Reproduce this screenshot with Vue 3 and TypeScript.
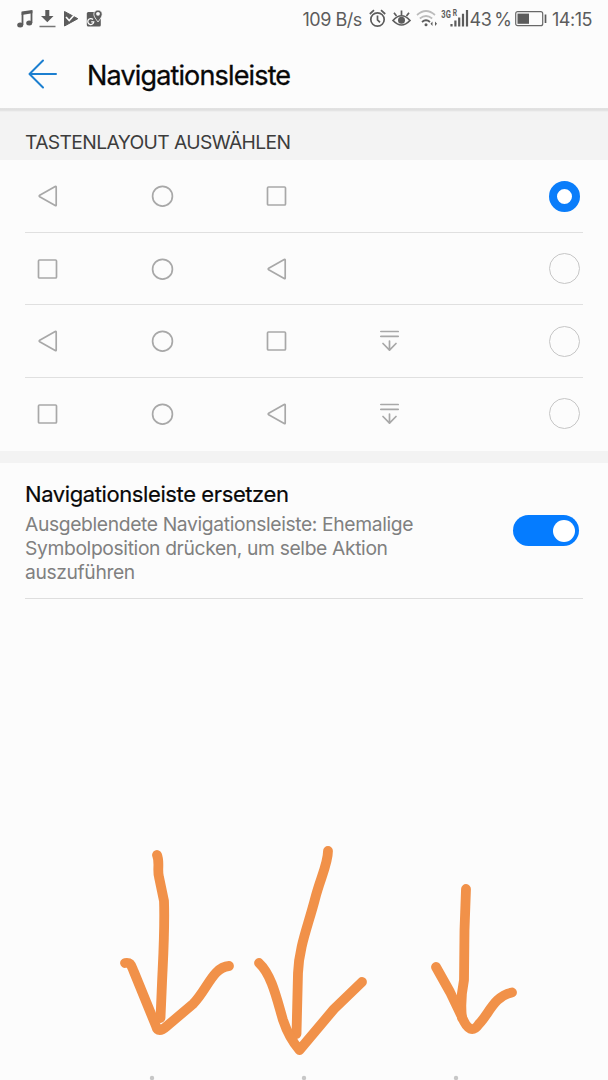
<script setup lang="ts">
import { ref } from 'vue'

type Key = 'back' | 'home' | 'recent' | 'hide' | 'none'

const layouts: Key[][] = [
  ['back', 'home', 'recent', 'none'],
  ['recent', 'home', 'back', 'none'],
  ['back', 'home', 'recent', 'hide'],
  ['recent', 'home', 'back', 'hide'],
]
const selected = ref(0)
const replaceBar = ref(true)
const description = [
  'Ausgeblendete Navigationsleiste: Ehemalige',
  'Symbolposition drücken, um selbe Aktion',
  'auszuführen',
]
</script>

<template>
  <div class="screen">
    <header class="status">
      <svg class="notes" width="90" height="22" viewBox="0 0 90 22">
        <path d="M6.500 17V5L15.500 3.500V15" fill="none" stroke="#5c5c5c" stroke-width="1.800" />
        <path d="M5.600 3.600 16.400 2v3.300L5.600 7Z" fill="#5c5c5c" />
        <ellipse cx="4.200" cy="17" rx="3" ry="2.500" fill="#5c5c5c" />
        <ellipse cx="13.200" cy="15" rx="3" ry="2.500" fill="#5c5c5c" />
        <path d="M29.300 2h4v6h4.200l-6.200 6.300L25 8h4.300Z" fill="#5c5c5c" />
        <path d="M23.500 18.500h16" stroke="#777" stroke-width="1.500" />
        <path d="M48.500 3.500 61.800 10.700 48.500 18Z" fill="#5c5c5c" stroke="#5c5c5c" stroke-linejoin="round" />
        <path d="m50 9 3.200 3.500L60 5" fill="none" stroke="#fcfcfc" stroke-width="1.600" />
        <rect x="70.800" y="4" width="14" height="14.500" rx="1.500" fill="#5c5c5c" />
        <path d="M77 11.500a3 3 0 1 0 .8 2.300h-2.600" fill="none" stroke="#fcfcfc" stroke-width="1.300" />
        <path d="M82 14c-2-3-4.200-5.200-4.200-7.800a4.200 4.200 0 0 1 8.400 0c0 2.600-2.200 4.800-4.200 7.800Z" fill="#5c5c5c" stroke="#fcfcfc" stroke-width=".8" />
        <circle cx="82" cy="5.800" r="1.900" fill="#fcfcfc" />
      </svg>
      <span class="speed">109 B/s</span>
      <svg class="indicators" width="104" height="24" viewBox="0 0 104 24" fill="none" stroke="#5c5c5c">
        <circle cx="9.500" cy="12.500" r="6.700" stroke-width="1.700" />
        <path d="M9.500 8.500v4.300l2.500 2.500M1.800 7 6 3.200M13 3.200 17.200 7" stroke-width="1.700" />
        <path d="M25 13.500Q33.500 4 42 13.500 33.500 22.500 25 13.500Z" stroke-width="1.700" />
        <circle cx="33.500" cy="13.300" r="3.500" fill="#5c5c5c" stroke="none" />
        <path d="M33.500 8V3.500M28.500 9 26 5.800M38.500 9 41 5.800" stroke-width="1.700" />
        <g stroke="#bcbcbc" stroke-width="1.700">
          <path d="M49 8q9-8 18 0M51.800 11.500q6.200-5 12.400 0" />
        </g>
        <path d="M54 15q4-3.500 8 0" stroke-width="1.800" />
        <circle cx="58" cy="17.800" r="1.500" fill="#5c5c5c" stroke="none" />
        <path d="m62.500 16.800 2-2.300v4.600ZM69 16.800l-2-2.300v4.600Z" fill="#5c5c5c" stroke="none" />
        <path d="M83.500 19.500v-2.500M87.400 19.500v-6M91.200 19.500v-9M95 19.500V6.800M99 19.500V3" stroke-width="2.200" />
        <text x="73.300" y="10.500" class="network" textLength="9.500" lengthAdjust="spacingAndGlyphs">3G</text>
        <text x="84.800" y="9" class="roaming" textLength="4.300" lengthAdjust="spacingAndGlyphs">R</text>
      </svg>
      <span class="percent">43 %</span>
      <svg class="battery" width="32" height="18" viewBox="0 0 32 18">
        <rect x=".7" y="1.700" width="27" height="14" rx="2" fill="none" stroke="#686868" stroke-width="1.200" />
        <rect x="2.500" y="3.600" width="11.500" height="10.200" fill="#5c5c5c" />
        <path d="M30.500 4.500v8.500" stroke="#5c5c5c" stroke-width="1.700" />
      </svg>
      <span class="clock">14:15</span>
    </header>

    <div class="titlebar">
      <svg width="30" height="30" viewBox="0 0 30 30" fill="none" stroke="#1c7fd0" stroke-width="2" stroke-linecap="round" stroke-linejoin="round">
        <path d="M28 15H2M15 1.500 1.500 15 15 28.500" />
      </svg>
      <h1>Navigationsleiste</h1>
    </div>

    <h2 class="section"><span>TASTENLAYOUT AUSWÄHLEN</span></h2>

    <div class="options">
      <div v-for="(keys, row) in layouts" :key="row" class="option" @click="selected = row">
        <div v-for="(key, i) in keys" :key="i" class="key">
          <svg width="24" height="24" viewBox="0 0 24 24" fill="none" stroke="#a8a8a8" stroke-width="1.700" stroke-linejoin="round" stroke-linecap="round">
            <path v-if="key === 'back'" d="M20.200 3.200V21Q20.200 22 19.200 21.400L3.700 12.700Q2.700 12 3.700 11.300L19.200 2.500Q20.200 2 20.200 3.200Z" />
            <circle v-else-if="key === 'home'" cx="11.500" cy="12.200" r="9.900" />
            <rect v-else-if="key === 'recent'" x="2.500" y="3" width="18" height="18" rx="1" />
            <path v-else-if="key === 'hide'" d="M.8 2.500h17.400M.8 7.300h17.400M9.500 12v9.200M3 14.500l6.500 6.700 6.500-6.700" />
          </svg>
        </div>
        <span class="radio" :class="{ checked: selected === row }"></span>
      </div>
    </div>

    <section class="replace">
      <div class="copy">
        <h3>Navigationsleiste ersetzen</h3>
        <p><span v-for="line in description" :key="line">{{ line }}</span></p>
      </div>
      <button class="switch" :class="{ on: replaceBar }" @click="replaceBar = !replaceBar"><i></i></button>
    </section>

    <svg class="drawing" width="608" height="240" viewBox="0 840 608 240" fill="none" stroke="#f19149" stroke-width="9.800" stroke-linecap="round" stroke-linejoin="round">
      <path d="M157 855C160 862 157 870 159 877L164 901C165 930 163 960 162 983L160.500 1018" />
      <path d="M125 963C131 962 131 965 134 972L156 1026Q158 1034 167 1026L193 1004C207 990 213 967 229 966" />
      <path d="M328 851C328 864 320 879 315 899C308 926 299 947 298 973L296.500 1034" />
      <path d="M259 963C272 975 277 1000 283 1020Q289 1038 299.500 1050L334 1009 362 982" />
      <path d="M466 889 464.500 930 464 980Q460 1000 462 1018" />
      <path d="M436 967 450 992 462 1017Q470 1037 479 1024C489 1014 494 996 512 992.500" />
      <g fill="#c7c7c7" stroke="none">
        <circle cx="152" cy="1078" r="2.200" />
        <circle cx="304" cy="1078" r="2.200" />
        <circle cx="456" cy="1078" r="2.200" />
      </g>
    </svg>
  </div>
</template>

<style>
body { margin: 0; background: #fcfcfc; }
</style>

<style scoped>
.screen {
  width: 608px;
  height: 1080px;
  overflow: hidden;
  display: flex;
  flex-direction: column;
  background: #fcfcfc;
  font-family: Inter, Roboto, sans-serif;
}
h1, h2, h3, p { margin: 0; font-weight: 400; white-space: nowrap; }
.status {
  height: 40px;
  box-sizing: border-box;
  padding: 0 0 0 15.500px;
  display: flex;
  align-items: center;
  color: #5c5c5c;
  font-size: 18px;
  white-space: nowrap;
}
.status svg { flex: none; }
.status span { flex: none; box-sizing: border-box; margin-top: -1px; }
.notes { margin: -3px 0 0; }
.status .speed { width: 61px; margin-left: 197px; letter-spacing: -.500px; }
.indicators { margin: -3px 0 0 4px; }
.network, .roaming { font-family: Roboto, sans-serif; font-weight: 700; fill: #5c5c5c; stroke: none; }
.network { font-size: 11px; }
.roaming { font-size: 9px; }
.status .percent { width: 43px; margin-left: -2px; letter-spacing: -.5px; word-spacing: -1.500px; }
.battery { margin: -2px 0 0 2.500px; }
.status .clock { margin-left: 5px; letter-spacing: -.5px; }
.titlebar {
  height: 68px;
  display: flex;
  align-items: center;
  padding-left: 28px;
  gap: 29px;
}
h1 { font-size: 27px; line-height: 34px; letter-spacing: -.850px; color: #080808; -webkit-text-stroke: .3px #080808; margin-top: 4px; }
.section {
  height: 52px;
  box-sizing: border-box;
  padding: 22px 0 0 25px;
  background: linear-gradient(#e2e2e2 0, #dfdfdf 2px, #f3f3f3 4px);
  color: #3c3c3c;
  font-size: 19.300px;
  line-height: 24px;
  letter-spacing: -.640px;
}
.options { height: 291px; padding: 0 25px; border-bottom: 12px solid #f3f3f3; }
.option { height: 72.600px; box-sizing: border-box; padding-top: 1px; display: flex; align-items: center; border-bottom: 1px solid #e0e0e0; }
.option:last-child { border-bottom: 0; padding-top: 0; height: 72px; }
.key { width: 114.500px; height: 24px; }
.key svg { display: block; margin-left: 11px; }
.radio { box-sizing: border-box; width: 31px; height: 31px; border: 1.500px solid #c6c6c6; border-radius: 50%; margin-left: auto; margin-right: 3px; }
.radio.checked { border: 8px solid #0a7dfa; background: #fff; }
.replace {
  height: 136px;
  box-sizing: border-box;
  margin: 0 25px;
  border-bottom: 1px solid #dedede;
  display: flex;
  justify-content: space-between;
}
.copy { padding-top: 16px; }
h3 { font-size: 22px; line-height: 30px; letter-spacing: -.400px; color: #080808; -webkit-text-stroke: .2px #080808; }
p { color: #808080; font-size: 19.300px; line-height: 24px; letter-spacing: -.370px; margin-top: 3px; }
p span { display: block; }
.switch { box-sizing: border-box; width: 66px; height: 31px; margin: 52px 4px 0 0; padding: 5px 4px; border: 0; border-radius: 16px; background: #bbb; display: flex; }
.switch.on { background: #057cff; justify-content: flex-end; }
.switch i { width: 22px; height: 22px; border-radius: 50%; background: #fff; }
.drawing { margin-top: auto; flex: none; }
</style>
